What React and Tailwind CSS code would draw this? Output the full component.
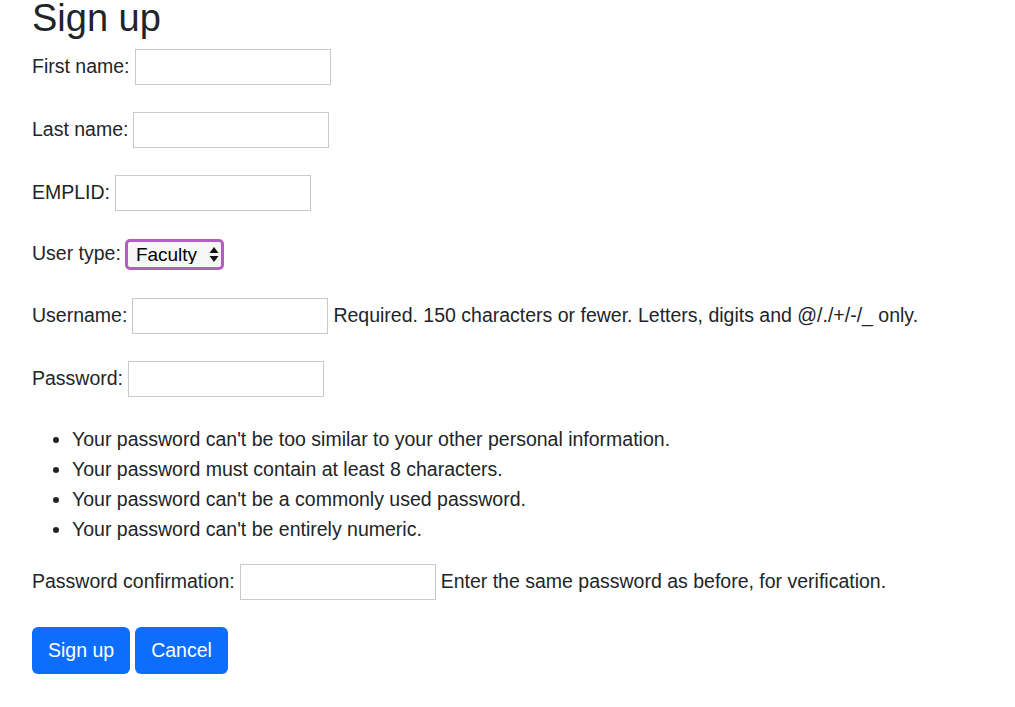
import { useState } from "react";

const Field = ({ label, help, width = "w-[196px]", type = "text" }) => {
  return (
    <div className="flex items-center h-[47px] mb-[16px]">
      <label className="mr-[5px]">{label}</label>
      <input
        type={type}
        className={`${width} h-[36px] border border-[#c9c9c9] bg-white outline-none px-2`}
      />
      {help && <span className="ml-[5px]">{help}</span>}
    </div>
  );
};

const App = () => {
  const [userType, setUserType] = useState("Faculty");

  const rules = [
    "Your password can't be too similar to your other personal information.",
    "Your password must contain at least 8 characters.",
    "Your password can't be a commonly used password.",
    "Your password can't be entirely numeric.",
  ];

  return (
    <div
      className="min-h-screen bg-white text-[#212529] text-[19.5px] px-[32px]"
      style={{ fontFamily: '"Liberation Sans", Arial, sans-serif' }}
    >
      <h1 className="text-[38px] leading-[36px] font-medium mb-[7px]">Sign up</h1>
      <form onSubmit={(e) => e.preventDefault()}>
        <Field label="First name:" />
        <Field label="Last name:" />
        <Field label="EMPLID:" />

        <div className="flex items-center h-[44px] mb-[16px]">
          <label className="mr-[4px]">User type:</label>
          <div className="relative w-[99px] h-[31px]">
            <select
              value={userType}
              onChange={(e) => setUserType(e.target.value)}
              className="appearance-none w-full h-full rounded-[5px] border-[3px] border-[#b35ec2] bg-[#f7f7f7] text-black text-[19px] pl-[8px] pr-6 leading-none outline-none"
            >
              <option>Faculty</option>
              <option>Student</option>
              <option>Staff</option>
            </select>
            <svg
              className="absolute right-[5px] top-[8px] pointer-events-none"
              width="10"
              height="15"
              viewBox="0 0 10 15"
            >
              <path d="M5 0 L9.5 6 H0.5 Z" fill="#111" />
              <path d="M5 15 L9.5 9 H0.5 Z" fill="#111" />
            </svg>
          </div>
        </div>

        <Field
          label="Username:"
          help="Required. 150 characters or fewer. Letters, digits and @/./+/-/_ only."
        />
        <div className="flex items-center h-[47px]">
          <label className="mr-[5px]">Password:</label>
          <input type="password" className="w-[196px] h-[36px] border border-[#c9c9c9] outline-none px-2" />
        </div>

        <ul className="list-disc pl-[40px] mt-[22px] leading-[30px]">
          {rules.map((r) => (
            <li key={r}>{r}</li>
          ))}
        </ul>

        <div className="mt-[14px]">
          <Field
            label="Password confirmation:"
            type="password"
            help="Enter the same password as before, for verification."
          />
        </div>

        <div className="flex gap-[5px] mt-[22px]">
          <button
            type="submit"
            className="h-[47px] px-[16px] rounded-[6px] bg-[#0d6efd] text-white"
          >
            Sign up
          </button>
          <button
            type="button"
            className="h-[47px] px-[16px] rounded-[6px] bg-[#0d6efd] text-white"
          >
            Cancel
          </button>
        </div>
      </form>
    </div>
  );
};

export default App;
